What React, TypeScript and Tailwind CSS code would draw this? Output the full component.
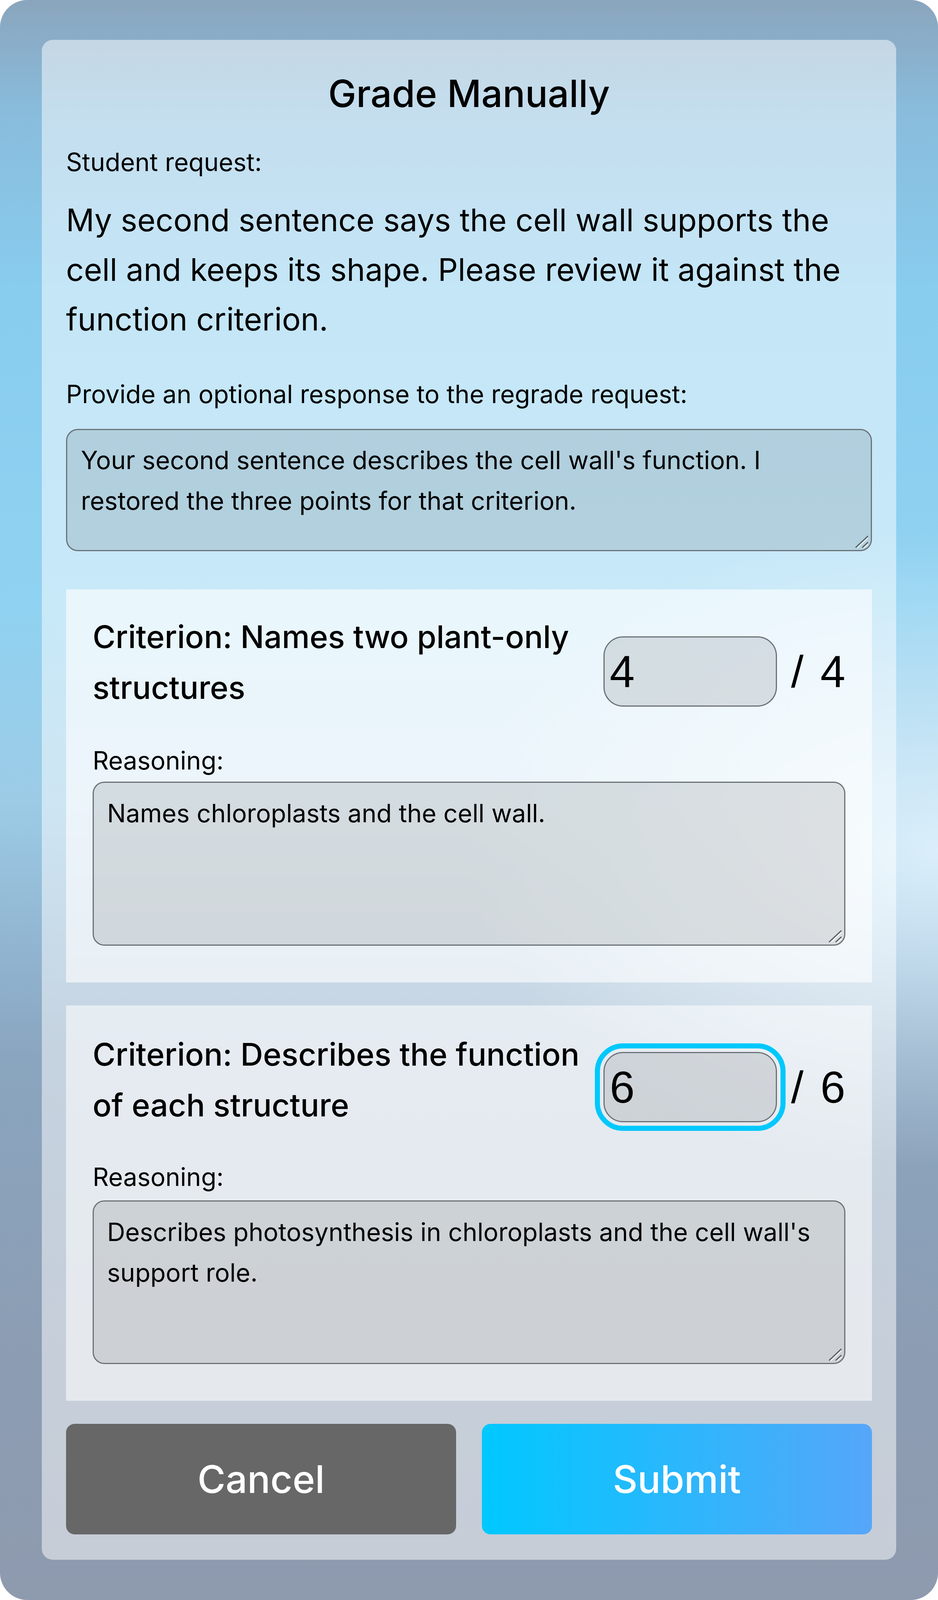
import React from "react";

function Grip() {
  return (
    <svg
      className="pointer-events-none absolute bottom-[7px] right-[8px]"
      width="36"
      height="34"
      viewBox="0 0 36 34"
    >
      <line x1="3" y1="31" x2="33" y2="3" stroke="#55595e" strokeWidth="3" strokeLinecap="round" />
      <line x1="6" y1="33" x2="34" y2="7" stroke="#ffffff" strokeWidth="2" opacity="0.85" />
      <line x1="20" y1="31" x2="33" y2="19" stroke="#55595e" strokeWidth="3" strokeLinecap="round" />
      <line x1="23" y1="33" x2="34" y2="23" stroke="#ffffff" strokeWidth="2" opacity="0.85" />
    </svg>
  );
}

type CriterionProps = {
  title: string;
  score: string;
  max: string;
  reasoning: string;
  focused?: boolean;
  first?: boolean;
};

function Criterion({ title, score, max, reasoning, focused, first }: CriterionProps) {
  return (
    <section
      className={
        first
          ? "bg-white/60 px-[68px] pt-[56px] pb-[94px]"
          : "mt-[59px] bg-white/55 px-[68px] pt-[60px] pb-[94px]"
      }
    >
      <div className="flex items-start justify-between">
        <h3 className="w-[1290px] text-[80px] font-medium leading-[130px] text-black">{title}</h3>
        <div className={first ? "mt-[64px] flex items-center" : "mt-[59px] flex items-center"}>
          {focused ? (
            <input
              defaultValue={score}
              className="box-border h-[180px] w-[444px] rounded-[50px] border-[3px] border-[#6c7278] bg-black/10 pl-[13px] font-['Liberation_Sans',Arial,sans-serif] text-[115px] text-black outline-[13px] outline-offset-[9px] outline-solid outline-[#00c8fc]"
            />
          ) : (
            <input
              defaultValue={score}
              className="box-border h-[180px] w-[444px] rounded-[50px] border-[3px] border-[#6c7278] bg-black/10 pl-[13px] font-['Liberation_Sans',Arial,sans-serif] text-[115px] text-black outline-none"
            />
          )}
          <span className="ml-[36px] flex whitespace-nowrap font-['Liberation_Sans',Arial,sans-serif] text-[115px] leading-none text-black">
            <span>/</span>
            <span className="ml-[43px]">{max}</span>
          </span>
        </div>
      </div>
      <p className={first ? "mt-[84px] text-[64px] leading-[76px] text-black" : "mt-[81px] text-[64px] leading-[76px] text-black"}>
        Reasoning:
      </p>
      <div className={first ? "relative mt-[16px]" : "relative mt-[22px]"}>
        <textarea
          readOnly
          defaultValue={reasoning}
          className={
            first
              ? "block h-[420px] w-full resize-none rounded-[30px] border-[3px] border-[#6c7278] bg-black/10 pl-[34px] pr-[30px] pt-[26px] text-[64px] leading-[104px] text-black outline-none"
              : "block h-[419px] w-full resize-none rounded-[30px] border-[3px] border-[#6c7278] bg-black/10 pl-[34px] pr-[30px] pt-[26px] text-[64px] leading-[104px] text-black outline-none"
          }
        />
        <Grip />
      </div>
    </section>
  );
}

export default function App() {
  return (
    <div className="h-[4096px] w-[2400px] overflow-hidden bg-white font-['Inter','Noto_Sans',sans-serif]">
      <div className="h-full w-full rounded-[70px] bg-[radial-gradient(50%_20%_at_100%_53%,rgba(222,241,252,0.95),rgba(222,241,252,0)),linear-gradient(180deg,#8aa5bd_0%,#89bcdc_7%,#88ccee_18%,#90d2f1_38%,#9ccbe6_50%,#90b3cf_60%,#8aa5bf_66%,#8c9db3_85%,#8e9aae_100%)] px-[107px] pt-[102px]">
        <div className="rounded-[28px] bg-white/50 px-[62px] pt-[83px] pb-[65px]">
          <h1 className="text-center text-[96px] font-medium leading-[108px] text-black">Grade Manually</h1>
          <p className="mt-[84px] text-[64px] leading-[76px] text-black">Student request:</p>
          <p className="mt-[46px] text-[80px] leading-[127px] text-black">
            My second sentence says the cell wall supports the cell and keeps its shape. Please review it against the
            function criterion.
          </p>
          <p className="mt-[91px] text-[64px] leading-[76px] text-black">
            Provide an optional response to the regrade request:
          </p>
          <div className="relative mt-[51px]">
            <textarea
              readOnly
              defaultValue="Your second sentence describes the cell wall's function. I restored the three points for that criterion."
              className="block h-[313px] w-full resize-none rounded-[30px] border-[3px] border-[#6c7278] bg-black/10 pl-[35px] pr-[100px] pt-[25px] text-[64px] leading-[104px] text-black outline-none"
            />
            <Grip />
          </div>

          <div className="mt-[98px]">
            <Criterion
              first
              title="Criterion: Names two plant-only structures"
              score="4"
              max="4"
              reasoning="Names chloroplasts and the cell wall."
            />
            <Criterion
              focused
              title="Criterion: Describes the function of each structure"
              score="6"
              max="6"
              reasoning="Describes photosynthesis in chloroplasts and the cell wall's support role."
            />
          </div>

          <div className="mt-[59px] flex gap-[66px]">
            <button className="h-[283px] flex-1 rounded-[22px] bg-[#676767] text-[98px] font-medium text-white">
              Cancel
            </button>
            <button className="h-[283px] flex-1 rounded-[22px] bg-[linear-gradient(90deg,#00c8ff,#56a6f9)] text-[98px] font-medium text-white">
              Submit
            </button>
          </div>
        </div>
      </div>
    </div>
  );
}
